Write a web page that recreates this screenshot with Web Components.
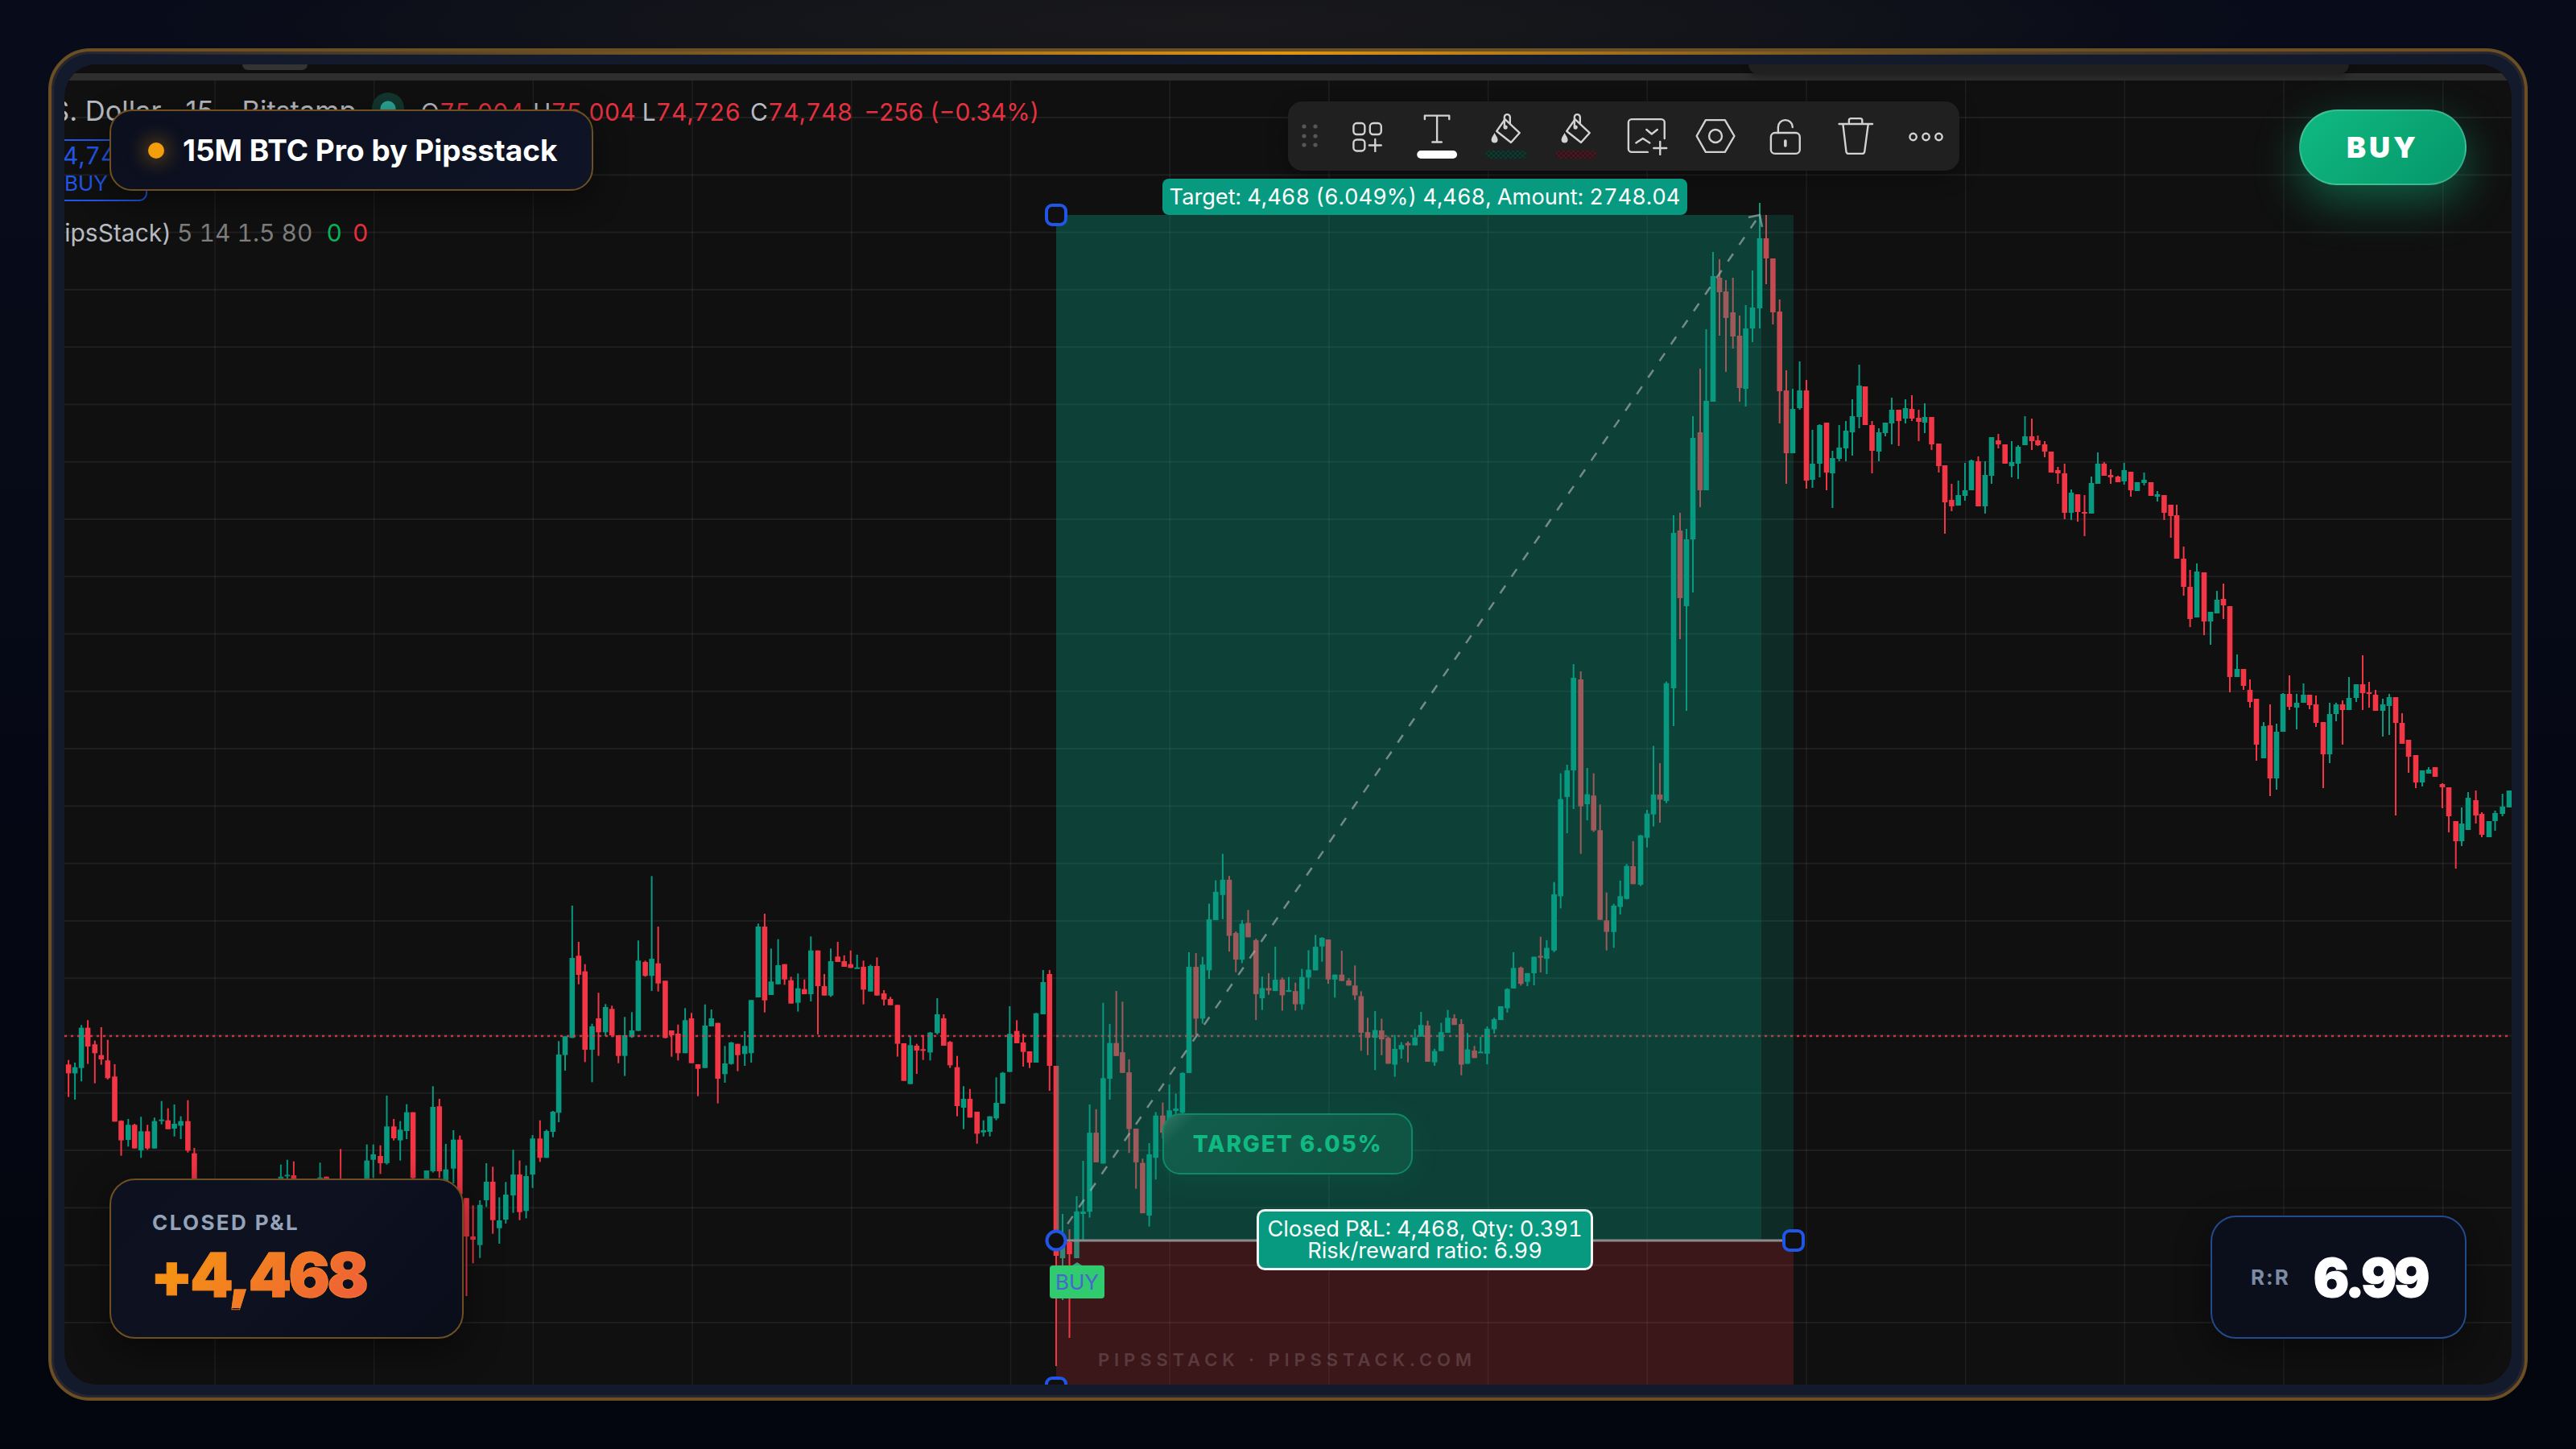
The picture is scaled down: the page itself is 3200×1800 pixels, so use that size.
<!DOCTYPE html>
<html lang="en">
<head>
<meta charset="utf-8">
<title>15M BTC Pro by Pipsstack</title>
<style>
html,body{margin:0;padding:0;height:100%}
body{width:3200px;height:1800px;box-sizing:border-box;padding:60px;overflow:hidden;font-family:Inter,"Liberation Sans",sans-serif;
background:radial-gradient(ellipse 1300px 130px at 1500px 30px,#19191c 0,#14151a 45%,rgba(20,21,26,0) 100%),linear-gradient(180deg,#080b19 0,#060916 40%,#03050e 100%)}
</style>
</head>
<body>
<device-frame>
  <top-strip></top-strip>
  <chart-area></chart-area>
  <legend-panel style="--x:0px;--y:0px"></legend-panel>
  <title-card style="--x:56px;--y:56px">15M BTC Pro by Pipsstack</title-card>
  <tool-bar style="--x:1520px;--y:46px"></tool-bar>
  <buy-button style="--x:2776px;--y:56px">BUY</buy-button>
  <tag-label style="--x:1364px;--y:142px;--w:652px;--h:45px" class="t">Target: 4,468 (6.049%) 4,468, Amount: 2748.04</tag-label>
  <target-pill style="--x:1364px;--y:1303px">TARGET 6.05%</target-pill>
  <tag-label style="--x:1481px;--y:1422px;--w:418px;--h:76px" outlined="">Closed P&amp;L: 4,468, Qty: 0.391<br>Risk/reward ratio: 6.99</tag-label>
  <buy-flag style="--x:1224px;--y:1492px">BUY</buy-flag>
  <water-mark style="--x:1284px;--y:1598px">PIPSSTACK · PIPSSTACK.COM</water-mark>
  <pnl-card style="--x:56px;--y:1384px" label="CLOSED P&amp;L">+4,468</pnl-card>
  <rr-card style="--x:2666px;--y:1430px" label="R:R">6.99</rr-card>
</device-frame>

<script>
function define(name, html, after){
  customElements.define(name, class extends HTMLElement{
    constructor(){
      super();
      this.attachShadow({mode:'open'}).innerHTML = html;
    }
    connectedCallback(){ if(after) after(this, this.shadowRoot); }
  });
}
const overlay = ':host{position:absolute;left:var(--x);top:var(--y);box-sizing:border-box}';

define('device-frame', `<style>
:host{display:block;position:relative;box-sizing:border-box;width:3080px;height:1680px;border:4px solid #6b4e23;border-radius:52px;padding:16px;background:#131a2b;box-shadow:inset 0 0 0 3px #25262e}
.glow{position:absolute;left:30px;right:30px;top:0;height:4px;background:linear-gradient(90deg,rgba(224,149,18,0) 0,rgba(224,149,18,.45) 25%,#e09512 50%,rgba(224,149,18,.25) 80%,rgba(224,149,18,0) 100%)}
.screen{position:relative;display:flex;flex-direction:column;width:3040px;height:1640px;overflow:hidden;border-radius:40px;background:#101010}
</style><div class="glow"></div><div class="screen"><slot></slot></div>`);

define('top-strip', `<style>
:host{display:block;position:relative;height:20px;flex:none;background:#0f0f0f}
.bar{position:absolute;left:0;right:0;top:11px;height:9px;background:#2e2e2e}
.a{position:absolute;left:221px;width:81px;top:0;height:7px;background:#333;border-radius:0 0 8px 8px}
.b{position:absolute;left:2092px;width:746px;top:0;height:12px;background:#202020;border-radius:0 0 12px 12px;box-shadow:0 3px 8px rgba(0,0,0,.35)}
</style><div class="bar"></div><div class="a"></div><div class="b"></div>`);

const SEG = [
 {m:[70,.797,1050,1/3],d:[[19,0,817,850,800,938],[29,1,827,850,810,948],[39,1,680,830,670,880],[49,0,680,750,652,815],[60,0,742,775,728,887],[70,0,782,798,678,818],[80,0,802,868,725,873],[91,0,862,1030,816,1030],[101,0,1027,1100,1025,1157],[112,1,1042,1098,1020,1123],[122,0,1042,1130,1038,1130],[132,1,1066,1137,1012,1165],[142,0,1066,1130,1042,1135],[153,1,1028,1130,1015,1130],[164,1,1022,1028,953,1040],[174,0,1025,1058,980,1058],[184,1,1038,1056,966,1085],[194,1,1028,1045,1010,1095],[205,0,1028,1138,950,1145],[215,0,1148,1300,1128,1300],
 [350,1,1235,1300,1190,1300],[360,1,1228,1234,1172,1300],[370,0,1230,1300,1178,1300],[411,1,1238,1300,1183,1300],[421,0,1235,1300,1235,1300],[443,0,1250,1300,1132,1300],[484,1,1175,1300,1115,1300],[494,1,1152,1172,1115,1240],[505,0,1158,1185,1118,1225],[515,1,1048,1185,933,1190],[526,0,1048,1092,1020,1100],[536,1,1060,1100,1028,1175],[546,1,995,1065,965,1095],[556,0,995,1240,995,1260],[577,1,1212,1260,1212,1270],[587,1,975,1215,898,1220],[597,0,973,1215,945,1240],[607,1,1208,1260,1113,1260],[619,1,1097,1205,1062,1260],[629,0,1097,1300,1082,1300]]},
 {m:[60,1/1.742,1380,1/3],d:[[905,0,325,468,325,690],[919,0,468,480,352,568],[934,1,350,500,333,548],[948,1,264,333,195,358],[962,0,264,407,208,458],[976,1,408,437,322,495],[990,1,312,405,265,420],[1006,1,237,315,145,380],[1020,0,237,377,185,407],[1034,1,243,373,203,400],[1048,1,103,237,90,287],[1064,0,103,175,35,190],[1078,1,75,175,70,175],[1092,1,3,78,0,98]]},
 {m:[70,.797,1050,1/3],d:[[783,1,780,997,730,1032],[793,1,712,782,712,840],[804,1,420,718,225,718],[814,0,412,483,360,518],[824,0,470,762,443,808],[835,1,675,762,665,883],[845,0,645,697,550,785],[856,1,603,697,592,712],[866,0,610,708,598,715],[876,0,708,785,708,812],[886,1,708,785,640,860],[897,1,690,715,622,718],[907,1,430,692,355,692],[918,0,435,487,430,490],[928,1,423,487,115,543],[938,0,440,515,303,545],[949,0,505,718,505,720],[959,0,690,708,690,788],[969,0,702,775,668,802],[980,1,652,775,607,775],[990,0,645,812,625,812],[1000,0,816,833,816,935],[1011,1,672,830,593,830],[1021,1,645,675,612,675],[1031,0,662,870,662,962],[1042,1,813,853,748,885],[1052,1,735,815,733,818],[1062,0,740,782,740,842],[1073,1,748,778,693,822],[1083,1,577,775,577,810],[1094,1,303,567,292,567],[1104,0,303,578,255,623],[1114,1,508,558,385,558],[1125,1,447,518,350,518],[1135,0,443,500,443,520],[1145,0,503,590,490,590],[1156,1,533,587,478,620],[1166,0,536,555,500,555],[1176,1,392,555,340,582],[1187,0,392,525,392,705],[1197,0,525,560,480,560],[1207,1,432,560,385,565],[1218,0,415,435,360,435],[1228,0,432,453,410,453],[1238,0,443,457,392,457],[1248,1,455,458,408,458],[1258,0,453,538,430,593],[1269,1,450,545,445,545],[1279,0,450,560,418,560],[1290,0,552,575,540,597],[1300,0,573,596,565,596],[1311,0,595,740,595,788],[1321,0,738,878,738,878],[1331,1,745,890,710,890],[1341,0,747,765,740,852],[1351,0,760,763,707,800],[1362,1,698,772,696,802],[1373,1,630,700,570,705],[1383,0,645,747,630,747],[1393,0,733,820,730,830],[1404,0,827,972,785,1010],[1414,1,945,978,898,1058],[1424,0,945,1015,908,1015],[1435,0,993,1075,993,1112],[1445,1,1062,1070,1025,1085],[1455,1,1010,1068,1010,1085],[1465,1,960,1018,865,1025],[1475,1,848,963,845,963],[1486,1,703,845,600,845],[1497,0,692,738,652,738],[1507,0,735,770,703,825],[1517,0,768,810,768,830],[1527,1,626,810,625,810],[1538,1,510,630,465,630],[1548,0,480,822,465,915]]},
 {m:[0,1,0,1],d:[[1312,0,1324,1560,1324,1697],[1320,1,1543,1563,1508,1615],[1328.5,0,1543,1558,1527,1662],[1337.5,1,1505,1563,1486,1563],[1345.5,1,1505,1508,1442,1541]]},
 {m:[1300,1/1.96,1000,1/2.8],d:[[105,1,1140,1415,1042,1435],[121,0,1140,1243,1058,1243],[138,1,950,1247,688,1247],[154,1,828,952,762,1025],[170,0,828,873,647,873],[185,0,860,932,684,932],[201,0,930,1127,885,1210],[218,0,1126,1243,1126,1335],[234,0,1245,1420,1230,1420],[250,1,1215,1428,1176,1466],[266,1,1080,1227,1068,1303],[283,0,1080,1140,1035,1160],[299,1,1062,1140,972,1140],[315,1,1056,1064,1004,1080],[331,1,932,1070,930,1075],[347,1,563,932,512,932],[364,0,563,743,515,800],[380,1,555,743,528,760],[396,1,398,575,343,605],[412,1,302,400,262,400],[429,1,260,313,170,397],[445,0,260,455,247,510],[461,0,445,538,440,582],[476,1,413,538,400,550],[491,0,410,460,365,460],[510,0,470,658,465,748],[525,1,637,672,597,713],[541,0,637,645,585,660],[557,1,608,647,493,647],[574,0,607,662,600,715],[590,1,644,650,598,650],[606,0,647,693,618,715],[622,1,598,693,570,712],[638,1,573,600,505,640],[655,1,493,575,452,575],[671,1,462,492,460,545],[686,0,468,607,468,622],[702,1,590,607,590,670],[719,0,590,612,507,612],[736,0,610,628,602,628],[751,0,628,662,558,678],[766,0,665,792,648,855],[782,0,790,810,740,870],[800,1,783,810,717,922],[816,0,784,815,743,870],[832,0,810,900,805,900],[848,1,848,903,800,945],[864,1,835,850,825,882],[880,0,828,836,822,895],[897,1,808,836,780,836],[912,1,765,806,720,806],[928,0,767,893,750,893],[945,1,856,895,848,907],[961,1,790,856,758,856],[977,1,740,792,713,792],[993,0,742,765,728,765],[1010,0,762,903,745,940],[1025,1,850,900,793,900],[1042,0,854,880,838,880],[1057,1,858,862,806,862],[1073,1,778,865,770,902],[1090,1,745,780,740,795],[1106,1,700,748,700,748],[1122,1,640,707,637,722],[1137,1,567,638,512,638],[1155,0,566,622,562,628],[1171,1,585,615,585,630],[1187,1,528,585,528,627],[1203,0,525,531,458,582],[1218,1,497,535,470,588],[1236,1,312,505,268,510]]},
 {m:[1800,1/3,700,1/3],d:[[392,1,1233,1442,1190,1448],[416,1,878,1240,782,1285],[440,1,771,870,750,1005],[464,1,426,771,375,915],[491,0,432,905,402,1082],[515,1,860,897,762,957],[539,0,865,995,782,1000],[563,0,994,1328,898,1328],[587,0,1330,1373,1226,1442],[614,1,1275,1373,1268,1432],[638,1,1240,1280,1182,1308],[662,1,1127,1250,1120,1252],[686,0,1128,1195,1035,1195],[714,1,1013,1197,1012,1202],[738,1,932,1022,918,1058],[762,1,861,935,680,980],[786,0,861,880,744,966],[810,1,446,885,440,893]]},
 {m:[0,1,0,1],d:[[2079,1,662,855,640,902],[2087,0,659,743,637,794],[2095,1,670,753,657,883],[2103,1,544,670,517,736],[2112,0,537,609,458,630],[2119.5,1,498,609,409,609],[2128,1,343,499,313,499],[2136,0,345,363,322,417],[2144,0,362,395,348,462],[2152.7,0,388,418,345,433],[2161,0,417,482,392,499],[2168.6,1,408,483,379,505],[2177,1,382,408,336,425],[2186,1,296,383,252,408],[2194,0,296,321,267,353],[2202.4,0,321,388,321,403],[2210.7,0,387,486,372,526],[2219,0,485,563,460,601],[2227,1,508,563,483,563],[2235.6,1,485,507,449,509],[2244,0,485,597,472,607],[2251.5,1,576,596,534,606],[2260.5,1,528,576,527,593],[2269,0,525,587,525,609],[2276.4,1,569,588,560,631],[2284.7,1,556,570,528,573],[2293,1,535,557,523,573],[2301,1,517,537,496,566],[2309.6,1,479,518,453,532],[2317,0,480,528,480,528],[2325.5,0,528,560,523,588],[2334,1,537,561,532,573],[2342,1,525,538,525,542],[2350,1,509,526,494,552],[2358.7,0,509,523,509,554],[2367,1,507,520,496,526],[2375,0,508,520,491,523],[2383.5,0,519,524,509,548],[2391,1,518,525,501,538],[2399.5,0,518,552,518,559],[2408.4,0,551,579,551,587],[2416,0,578,624,578,663],[2424.4,0,621,629,601,635],[2432.7,1,615,628,597,628],[2441,1,609,616,575,622],[2449,1,572,609,571,609],[2457.5,0,573,629,567,629],[2466,1,590,629,573,638],[2474,1,543,591,543,601],[2482.4,0,547,552,539,557],[2490.7,0,552,576,552,576],[2499,1,574,579,548,593],[2507,1,555,576,553,595],[2515.5,1,542,553,517,553],[2524,0,542,548,520,559],[2531.5,0,547,553,541,554],[2540,0,552,561,548,568],[2548,0,561,587,561,587],[2556.4,0,584,588,580,601],[2564.7,0,588,637,576,645],[2573,1,612,637,608,646],[2581,0,614,636,614,648],[2589.5,0,636,638,615,666],[2598,1,600,638,592,638],[2606,1,576,601,562,601],[2613.8,0,576,591,574,591],[2622,0,590,593,583,601],[2631,0,592,599,591,599],[2638.7,1,584,598,575,602],[2647,0,586,609,586,617],[2655,1,599,610,599,610],[2663.5,1,596,600,587,603],[2672,0,599,616,599,616],[2680,1,614,617,610,623],[2688.4,0,615,637,615,646],[2696.7,0,627,641,627,668],[2704,0,640,694,627,694],[2712.6,0,694,729,679,740],[2720.6,0,729,769,708,779],[2729,1,710,767,700,767],[2738,0,711,772,711,789],[2746,1,760,772,760,801],[2754,1,745,762,734,762],[2762,0,744,752,725,769],[2770,0,753,841,753,860],[2779,1,831,841,813,841],[2787,0,831,852,831,857],[2795,0,857,872,844,879],[2803,0,868,925,868,945],[2812,1,902,942,897,942],[2820,0,901,967,875,989],[2828,1,909,967,899,981],[2836,1,862,909,861,909],[2844,0,862,878,839,882],[2853,1,873,879,862,906],[2861.5,1,863,873,849,873],[2869,0,863,876,863,881],[2877,0,875,898,864,903],[2886,0,897,937,897,979],[2894,1,887,937,873,948],[2902,1,875,887,873,896],[2910,0,875,882,870,925],[2918,1,867,882,841,882],[2927,1,850,867,850,872],[2935,0,850,861,814,882],[2943,0,860,861,847,879],[2951,0,863,883,857,883],[2960,1,875,883,868,915],[2968,1,866,877,862,913],[2976,0,866,898,866,1013],[2984,0,898,924,886,924],[2992,0,919,940,919,960],[3001,0,938,972,938,979],[3009,1,957,972,957,977],[3017,1,956,961,953,961],[3025,0,953,965,953,965],[3034,0,974,978,973,1004],[3042,0,978,1014,978,1034],[3050.7,0,1020,1045,1020,1079],[3058,1,1023,1045,1003,1051],[3066,1,991,1031,984,1031],[3075.6,0,994,1013,982,1023],[3083,0,1011,1037,1009,1040],[3092,1,1020,1040,1020,1040],[3099.5,1,1010,1020,1007,1032],[3108.7,1,1002,1011,986,1014],[3117,1,982,1003,982,1003]]}
];

function chartSvg(){
  let g='', c='';
  for(let i=0;i<15;i++){const x=267+197.7*i; g+=`<rect x="${(x-.75).toFixed(1)}" y="100" width="1.5" height="1620"/>`;}
  for(let i=0;i<22;i++){const y=146+71.28*i; g+=`<rect x="80" y="${(y-1).toFixed(1)}" width="3040" height="2"/>`;}
  for(const s of SEG){
    const [ax,bx,ay,by]=s.m;
    for(const [z,col,t,b,h,l] of s.d){
      const x=ax+z*bx, T=ay+t*by, B=ay+b*by, H=ay+h*by, L=ay+l*by, f=col?'#089981':'#f23645';
      c+=`<rect fill="${f}" x="${(x-1).toFixed(1)}" y="${H.toFixed(1)}" width="2" height="${Math.max(L-H,1).toFixed(1)}"/>`;
      c+=`<rect fill="${f}" x="${(x-3.3).toFixed(1)}" y="${T.toFixed(1)}" width="6.6" height="${Math.max(B-T,2).toFixed(1)}"/>`;
    }
  }
  const blue='#2056e8';
  return `<svg xmlns="http://www.w3.org/2000/svg" width="3040" height="1620" viewBox="80 100 3040 1620">
  <g fill="rgba(255,255,255,.065)">${g}</g>
  ${c}
  <line x1="80" y1="1287" x2="3120" y2="1287" stroke="#f23645" stroke-width="2.5" stroke-dasharray="3 5" opacity=".85"/>
  <rect x="1312" y="267" width="916" height="1274" fill="rgba(8,153,129,.2)"/>
  <rect x="1312" y="267" width="876" height="1274" fill="rgba(8,153,129,.2)"/>
  <rect x="1312" y="1541" width="916" height="200" fill="rgba(242,54,69,.2)"/>
  <line x1="1312" y1="1541" x2="2186" y2="267" stroke="#aeb2b2" stroke-opacity=".65" stroke-width="2.5" stroke-dasharray="11.5 13.5"/>
  <path d="M2172 270L2186 267L2189 282" fill="none" stroke="#aeb2b2" stroke-opacity=".65" stroke-width="2.5"/>
  <line x1="1312" y1="1541" x2="2228" y2="1541" stroke="#8b8b8b" stroke-width="3"/>
  <rect x="1300" y="255" width="24" height="24" rx="7" fill="#101010" stroke="${blue}" stroke-width="4"/>
  <circle cx="1312" cy="1541" r="11.5" fill="#101010" stroke="${blue}" stroke-width="4"/>
  <rect x="2216" y="1529" width="24" height="24" rx="7" fill="#101010" stroke="${blue}" stroke-width="4"/>
  <rect x="1300" y="1712" width="24" height="24" rx="7" fill="#101010" stroke="${blue}" stroke-width="4"/>
  </svg>`;
}
define('chart-area', `<style>:host{display:block;flex:1;position:relative;overflow:hidden}svg{display:block}</style>`+chartSvg());

define('legend-panel', `<style>
${overlay}
:host{display:flex;flex-direction:column;font:400 30px/36px Inter,"Liberation Sans",sans-serif;color:#b8bbc2;white-space:nowrap;width:1300px;font-variant-numeric:tabular-nums}
.row{display:flex;align-items:baseline}
.r1{margin:40px 0 0 -16px;height:38px}
.big{font-size:34.5px;font-variant-numeric:normal}
.red{color:#e5303f}
.dot{flex:none;align-self:center;width:40px;height:40px;border-radius:50%;background:radial-gradient(circle,#2ba595 0 9px,#13362f 10px 20px);margin:0 21px 8px 19px}
.box{box-sizing:border-box;margin:15px 0 0 -20px;width:123px;height:77px;border:2px solid #2056e8;border-radius:10px;color:#2056e8;padding-left:18px;line-height:30px;padding-top:3px}
.box div:first-child{margin-left:-2px}
.box div+div{font-size:26px;line-height:30px;margin-top:5px}
.r3{margin:21px 0 0 -19px;height:36px}
.dim{color:#7d7d7d;margin-left:7px}
.g0{color:#06b45a;margin-left:17px}.r0{color:#e5303f;margin-left:13px}
</style>
<div class="row r1"><span class="big">S. Dollar</span><span class="big" style="margin-left:30px">15</span><span class="big" style="margin-left:35px">Bitstamp</span><span class="dot"></span>
<span>O<span class="red">75,004</span></span><span style="margin-left:11px">H<span class="red">75,004</span></span><span style="margin-left:8px">L<span class="red">74,726</span></span><span style="margin-left:12px">C<span class="red">74,748</span></span><span class="red" style="margin-left:14px;font-variant-numeric:normal">−256 (−0.34%)</span></div>
<div class="box"><div>4,748</div><div>BUY</div></div>
<div class="row r3"><span>PipsStack)</span><span class="dim">5 14 1.5 80</span><span class="g0">0</span><span class="r0">0</span></div>`);

define('title-card', `<style>
${overlay}
:host{display:flex;align-items:center;width:601px;height:101px;padding-left:46px;gap:23px;border:2px solid #6e5020;border-radius:28px;background:linear-gradient(135deg,#0b0f1e,#0f1426);box-shadow:0 12px 40px rgba(0,0,0,.45);color:#fff;font:700 37px/1 Inter,"Liberation Sans",sans-serif;white-space:nowrap}
i{flex:none;width:20px;height:20px;border-radius:50%;background:#f59e0b;box-shadow:0 0 24px 4px rgba(245,158,11,.4)}
</style><i></i><span><slot></slot></span>`);

const S='fill="none" stroke="#d2d2d2" stroke-width="2.4" stroke-linecap="round" stroke-linejoin="round"';
const bucket=(id,a,b)=>`<svg viewBox="0 0 87 86"><defs><pattern id="${id}" width="6" height="6" patternUnits="userSpaceOnUse"><rect width="6" height="6" fill="${a}"/><rect width="3" height="3" fill="${b}"/><rect x="3" y="3" width="3" height="3" fill="${b}"/></pattern></defs>
<g ${S}><path d="M42.7 22L61 39L50.2 51L32.3 37Z"/><path d="M42 31V19.5a3.5 3.5 0 0 1 7 0V27"/></g><circle cx="43.3" cy="32" r="2.6" fill="#d2d2d2"/><path d="M29.7 39c-2 4-4 6-4 8.5a4 4 0 0 0 8 0c0-2.5-2-4.5-4-8.5z" fill="#d2d2d2"/><rect x="18.7" y="61" width="51" height="10" rx="5" fill="url(#${id})"/></svg>`;
define('tool-bar', `<style>
${overlay}
:host{display:flex;width:834px;height:86px;background:#202020;border-radius:18px;box-shadow:0 8px 24px rgba(0,0,0,.35)}
svg{display:block;flex:1;height:86px;min-width:0}
svg.d{flex:0 0 54px}
</style>
<svg class="d" viewBox="0 0 54 86" fill="#565656"><circle cx="20" cy="31" r="2.6"/><circle cx="34" cy="31" r="2.6"/><circle cx="20" cy="43" r="2.6"/><circle cx="34" cy="43" r="2.6"/><circle cx="20" cy="54" r="2.6"/><circle cx="34" cy="54" r="2.6"/></svg>
<svg viewBox="0 0 87 86"><g ${S}><rect x="27.5" y="27" width="14" height="14" rx="4"/><rect x="48" y="27" width="14" height="14" rx="4"/><rect x="27.5" y="47.5" width="14" height="14" rx="4"/><path d="M47 54.5h15M54.5 47v15"/></g></svg>
<svg viewBox="0 0 87 86"><g ${S}><path d="M29 22v-4.5h30.5V22M44.3 17.5V50.5M38.5 50.5h11.5"/></g><rect x="19.3" y="61" width="50" height="10" rx="5" fill="#fff"/></svg>
${bucket('cg','#103a30','#0b2722')}
${bucket('cr','#471920','#2f1318')}
<svg viewBox="0 0 87 86"><g ${S}><path d="M46 63H26a4 4 0 0 1-4-4V26a4 4 0 0 1 4-4H63a4 4 0 0 1 4 4V46M61.5 50v16M53.5 58h16M31.5 51.5L40 46L48.5 51.5M44.5 35L51 40.5L58 35"/></g></svg>
<svg viewBox="0 0 87 86"><g ${S}><path d="M20.7 43L32 23H56L67.7 43L56 63H32Z"/><circle cx="44.2" cy="43" r="8"/></g></svg>
<svg viewBox="0 0 87 86"><g ${S}><rect x="26" y="39" width="36" height="26" rx="5"/><path d="M35 39V32a9 9 0 0 1 18 0"/><path d="M44 49v6" stroke-width="3.6"/></g></svg>
<svg viewBox="0 0 87 86"><g ${S}><path d="M23.7 28H65.3M36 28V23.5a2.5 2.5 0 0 1 2.5-2.5H50a2.5 2.5 0 0 1 2.5 2.5V28M28.5 28L32.5 62a3 3 0 0 0 3 3H52.5a3 3 0 0 0 3-3L60 28"/></g></svg>
<svg viewBox="0 0 87 86"><g ${S} stroke-width="2"><circle cx="29.7" cy="44" r="4.2"/><circle cx="45.7" cy="44" r="4.2"/><circle cx="61.7" cy="44" r="4.2"/></g></svg>`);

define('buy-button', `<style>
${overlay}
:host{display:flex;align-items:center;justify-content:center;width:208px;height:94px;border-radius:47px;border:2px solid rgba(255,255,255,.2);background:linear-gradient(135deg,#10b981,#059669);box-shadow:0 20px 56px rgba(16,185,129,.45);color:#fff;font:900 36px/1 Inter,"Liberation Sans",sans-serif;letter-spacing:4px}
</style><slot></slot>`);

define('tag-label', `<style>
${overlay}
:host{display:flex;align-items:center;justify-content:center;width:var(--w);height:var(--h);background:#089a80;border-radius:8px;color:#fff;font:400 27.2px/27px Inter,"Liberation Sans",sans-serif;text-align:center;white-space:nowrap;font-variant-numeric:tabular-nums}
:host([outlined]){border:3px solid #f2f2f2;border-radius:10px}
</style><span><slot></slot></span>`);

define('target-pill', `<style>
${overlay}
:host{display:flex;align-items:center;justify-content:center;width:311px;height:76px;border-radius:22px;border:2px solid #0f8a66;background:linear-gradient(135deg,#327763 0,#125c4b 11%,#115846 55%,#105343 100%);box-shadow:0 6px 36px rgba(16,185,129,.1);color:#10b981;font:800 28px/1 Inter,"Liberation Sans",sans-serif;letter-spacing:1.9px;white-space:nowrap}
</style><slot></slot>`);

define('buy-flag', `<style>
${overlay}
:host{display:flex;align-items:center;justify-content:center;width:68px;height:41px;background:#2fcb6e;border-radius:4px;color:#4a63d6;font:400 26px/1 Inter,"Liberation Sans",sans-serif}
:host::before{content:"";position:absolute;left:28px;top:-4px;border:6px solid transparent;border-top:0;border-bottom:4px solid #3f9f80}
</style><slot></slot>`);

define('water-mark', `<style>
${overlay}
:host{font:600 22px/1 Inter,"Liberation Sans",sans-serif;letter-spacing:5.9px;color:rgba(255,255,255,.17);white-space:nowrap}
</style><slot></slot>`);

define('pnl-card', `<style>
${overlay}
:host{display:flex;flex-direction:column;width:440px;height:199px;padding:38px 0 0 51px;border:2px solid #6e5020;border-radius:32px;background:linear-gradient(135deg,#0c101f,#0d1120 50%,#0a0d1a);box-shadow:0 14px 44px rgba(0,0,0,.5)}
.l{font:700 26px/30px Inter,"Liberation Sans",sans-serif;letter-spacing:2.4px;color:#94a3b8;white-space:nowrap}
.v{margin:7px 0 0 -2px;font:900 76px/84px Inter,"Liberation Sans",sans-serif;letter-spacing:-3.4px;background:linear-gradient(135deg,#f59e0b,#ef5a3c);-webkit-background-clip:text;background-clip:text;color:transparent;-webkit-text-stroke:1px rgba(240,130,30,.85);width:max-content}
</style><div class="l" id="l"></div><div class="v"><slot></slot></div>`, (el,sr)=>{sr.getElementById('l').textContent=el.getAttribute('label')});

define('rr-card', `<style>
${overlay}
:host{display:flex;align-items:center;width:318px;height:153px;padding-left:48px;gap:29px;border:2px solid #234a8a;border-radius:32px;background:#0b0e1b;box-shadow:0 14px 44px rgba(0,0,0,.45);white-space:nowrap}
.l{font:700 26px/1 Inter,"Liberation Sans",sans-serif;letter-spacing:2px;color:#7c8ba5}
.v{font:900 66px/1 Inter,"Liberation Sans",sans-serif;letter-spacing:-3.5px;color:#fff;-webkit-text-stroke:1px #fff}
</style><div class="l" id="l"></div><div class="v"><slot></slot></div>`, (el,sr)=>{sr.getElementById('l').textContent=el.getAttribute('label')});
</script>
</body>
</html>
